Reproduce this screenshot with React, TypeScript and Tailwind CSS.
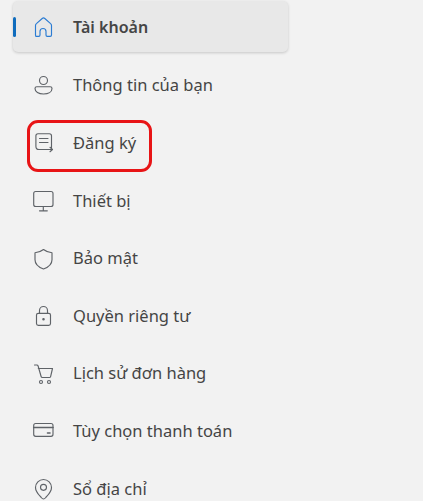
const stroke = "#5f6368";

function Icon({ children, color = stroke }: { children: React.ReactNode; color?: string }) {
  return (
    <svg width="24" height="24" viewBox="0 0 24 24" fill="none" stroke={color} strokeWidth="1.15" strokeLinecap="round" strokeLinejoin="round" className="shrink-0">
      {children}
    </svg>
  );
}

const items = [
  {
    label: "Thông tin của bạn",
    icon: (
      <>
        <circle cx="12.5" cy="6.5" r="4" />
        <path d="M4 14.5c0-1 .8-1.800 1.800-1.800h13.400c1 0 1.800.8 1.800 1.800 0 3.400-3.600 5.500-8.500 5.500S4 17.900 4 14.500z" />
      </>
    ),
  },
  {
    label: "Đăng ký",
    icon: (
      <>
        <path d="M20.500 16.500V4.800c0-1.200-.9-2.100-2.100-2.100H7c-1.200 0-2.100.9-2.100 2.100v10.400c0 2 1.300 3.300 3.100 3.300h13" />
        <path d="M19 16.300l2.500 2.200-2.500 2.200" />
        <path d="M8.500 7.500h8.500M8.500 11.500h8.500" />
      </>
    ),
  },
  {
    label: "Thiết bị",
    icon: (
      <>
        <rect x="2.700" y="2.500" width="19.300" height="15" rx="2" />
        <path d="M12.300 17.500v4M8.500 21.800h7.800" />
      </>
    ),
  },
  {
    label: "Bảo mật",
    icon: <path d="M12.500 2.500c2.500 2 5.200 3 8.500 3.200v7c0 4.300-2.800 7.200-8.500 9.300C6.800 19.900 4 17 4 12.700v-7c3.300-.2 6-1.200 8.500-3.200z" />,
  },
  {
    label: "Quyền riêng tư",
    icon: (
      <>
        <rect x="5.500" y="9.300" width="14" height="12" rx="1.800" />
        <path d="M8.500 9.300V6.500a4 4 0 0 1 8 0v2.800" />
        <circle cx="12.500" cy="15.300" r=".7" fill={stroke} />
      </>
    ),
  },
  {
    label: "Lịch sử đơn hàng",
    icon: (
      <>
        <path d="M3.500 3h2.300c.7 0 1.100.4 1.300 1l3 10.500c.2.700.7 1 1.300 1h7c.6 0 1-.3 1.200-.9L21.500 6.500H7.300" />
        <circle cx="10" cy="20" r="1.500" />
        <circle cx="18" cy="20" r="1.500" />
      </>
    ),
  },
  {
    label: "Tùy chọn thanh toán",
    icon: (
      <>
        <rect x="2.700" y="4.500" width="19.300" height="12.800" rx="2" />
        <path d="M2.700 8.500h19.300M16.500 14h2.500" strokeWidth="1.600" />
      </>
    ),
  },
  {
    label: "Sổ địa chỉ",
    icon: (
      <>
        <path d="M12.500 22c-1 0-1.700-.8-2.300-1.500C7.500 17.500 4.500 14.800 4.500 10.500a8 8 0 0 1 16 0c0 4.300-3 7-5.700 10-.6.700-1.300 1.500-2.300 1.500z" />
        <circle cx="12.500" cy="10.300" r="3" />
      </>
    ),
  },
];

export default function App() {
  return (
    <div className="relative h-[501px] w-[423px] overflow-hidden bg-[#f2f2f2] pl-[13px] pt-[1px] font-['Noto_Sans','Open_Sans',sans-serif] text-[16.5px] text-[#454545]">
      {/* active row */}
      <div className="relative flex h-[51px] w-[275px] items-center gap-[18px] rounded-[5px] bg-[#e8e8e8] pl-[18px] shadow-[0_1px_3px_rgba(0,0,0,0.18)]">
        <span className="absolute left-0 top-[16px] h-[20px] w-[3px] rounded-sm bg-[#0f6cbd]" />
        <Icon color="#2b7cd3">
          <path d="M4.500 20V10.500c0-.8.300-1.400.9-1.900l5.800-5.100c.8-.7 1.800-.7 2.600 0l5.800 5.100c.6.500.9 1.100.9 1.900V20c0 .8-.6 1.300-1.300 1.300h-3c-.7 0-1.200-.5-1.200-1.300v-3.500a3 3 0 0 0-6 0V20c0 .8-.5 1.300-1.200 1.300h-3C5.100 21.300 4.500 20.800 4.500 20z" />
        </Icon>
        <span className="text-[16px] font-semibold">Tài khoản</span>
      </div>

      <ul className="w-[275px]">
        {items.map((item) => (
          <li key={item.label} className="flex h-[57.6px] translate-y-[5px] items-center gap-[18px] pl-[18px]">
            <Icon>{item.icon}</Icon>
            <span>{item.label}</span>
          </li>
        ))}
      </ul>

      {/* red highlight drawn over the list */}
      <div className="absolute left-[27px] top-[120px] h-[52px] w-[125px] rounded-[11px] border-[3px] border-[#e81416]" />
    </div>
  );
}
